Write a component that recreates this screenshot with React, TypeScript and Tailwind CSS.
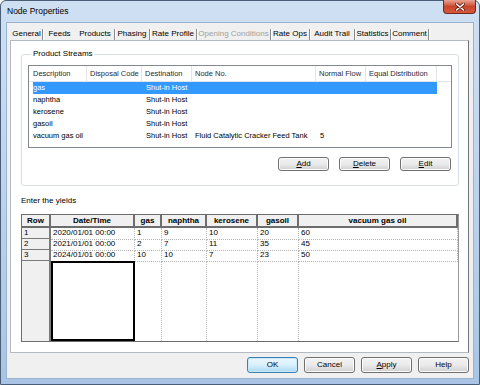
import React from 'react';

const tabs: { label: string; w: string; sep: boolean; disabled?: boolean }[] = [
  { label: 'General', w: 'w-[31px]', sep: true },
  { label: 'Feeds', w: 'w-[33px]', sep: false },
  { label: 'Products', w: 'w-[38px]', sep: true },
  { label: 'Phasing', w: 'w-[34px]', sep: true },
  { label: 'Rate Profile', w: 'w-[46px]', sep: true },
  { label: 'Opening Conditions', w: 'w-[73px]', sep: true, disabled: true },
  { label: 'Rate Ops', w: 'w-[38px]', sep: true },
  { label: 'Audit Trail', w: 'w-[44px]', sep: true },
  { label: 'Statistics', w: 'w-[35px]', sep: true },
  { label: 'Comment', w: 'w-[37px]', sep: true },
];

const streams = [
  { desc: 'gas', dest: 'Shut-in Host', node: '', flow: '' },
  { desc: 'naphtha', dest: 'Shut-in Host', node: '', flow: '' },
  { desc: 'kerosene', dest: 'Shut-in Host', node: '', flow: '' },
  { desc: 'gasoil', dest: 'Shut-in Host', node: '', flow: '' },
  { desc: 'vacuum gas oil', dest: 'Shut-in Host', node: 'Fluid Catalytic Cracker Feed Tank', flow: '5' },
];

const listCols = 'grid grid-cols-[58px_55px_50px_124px_50px_71px_1fr]';

const yields = [
  ['1', '2020/01/01 00:00', '1', '9', '10', '20', '60'],
  ['2', '2021/01/01 00:00', '2', '7', '11', '35', '45'],
  ['3', '2024/01/01 00:00', '10', '10', '7', '23', '50'],
];

const gridCols = 'grid grid-cols-[29px_84px_27px_45px_51px_41px_1fr]';

const WinButton = ({ children, primary }: { children: React.ReactNode; primary?: boolean }) => (
  <button
    className={
      'flex h-full w-[51px] items-center justify-center rounded-[3px] border text-[8px] text-black ' +
      (primary
        ? 'border-[#3c7fb1] bg-gradient-to-b from-[#eaf6fd] via-[#d9f0fc] to-[#a7d9f5] shadow-[inset_0_0_0_1px_#cbe8f8]'
        : 'border-[#707070] bg-gradient-to-b from-[#f2f2f2] via-[#ebebeb] to-[#cfcfcf] shadow-[inset_0_0_0_1px_#fcfcfc]')
    }
  >
    {children}
  </button>
);

export default function App() {
  return (
    <div className="flex h-[385px] w-[480px] flex-col rounded-t-[6px] border border-[#4a5e78] bg-gradient-to-b from-[#cfe0f3] via-[#bcd3ec] to-[#a9c4e4] px-[5px] pb-[5px] font-['Liberation_Sans',Arial,sans-serif]">
      {/* title bar */}
      <div className="relative flex h-[21px] shrink-0 items-center pl-[1px]">
        <span className="text-[8.5px] text-black">Node Properties</span>
        <div className="absolute right-[-2px] top-[-1px] flex h-[14px] w-[33px] items-center justify-center rounded-b-[4px] border border-t-0 border-[#6b2b22] bg-gradient-to-b from-[#e8a493] via-[#c9462c] to-[#d8583c]">
          <svg width="10" height="8" viewBox="0 0 10 8">
            <path d="M1.5 1 L8.5 7 M8.5 1 L1.5 7" stroke="#5a1b12" strokeWidth="3" strokeLinecap="round" />
            <path d="M1.5 1 L8.5 7 M8.5 1 L1.5 7" stroke="#ffffff" strokeWidth="1.6" strokeLinecap="round" />
          </svg>
        </div>
      </div>

      {/* client area */}
      <div className="flex h-[357px] w-[468px] flex-col border border-[#9bb4d2] bg-[#f0f0f0]">
        {/* tab strip */}
        <div className="flex h-[17px] shrink-0 items-center pl-[4px] pt-[5px] text-[8px]">
          {tabs.map((t) => (
            <React.Fragment key={t.label}>
              <span
                className={
                  'flex justify-center whitespace-nowrap ' +
                  t.w +
                  (t.disabled ? ' text-[#a0a0a0]' : ' text-black')
                }
              >
                {t.label}
              </span>
              {t.sep && <span className="h-[11px] w-[1px] bg-[#8a8a8a] shadow-[1px_0_0_#ffffff]" />}
            </React.Fragment>
          ))}
        </div>

        {/* tab page */}
        <div className="ml-[3px] flex h-[313px] w-[459px] flex-col border border-[#b5b9c1] border-r-[#6f737a] bg-white px-[10px]">
          <fieldset className="mt-[7px] h-[138px] w-[438px] shrink-0 rounded-[3px] border border-[#d5dfe5] px-[6px]">
            <legend className="ml-[3px] px-[2px] text-[8px] text-black">Product Streams</legend>
            <div className="mt-[5px] h-[83px] w-[424px] border border-[#828790] bg-white text-[7.5px] text-black">
              <div className={listCols + ' h-[16px] border-b border-[#e0e3e8] text-[#1e2a3a]'}>
                {['Description', 'Disposal Code', 'Destination', 'Node No.', 'Normal Flow', 'Equal Distribution'].map(
                  (h, i) => (
                    <div key={h} className={'flex items-center border-r border-[#e5e5e5] ' + (i === 0 ? 'pl-[4px]' : 'pl-[3px]')}>
                      {h}
                    </div>
                  )
                )}
                <div />
              </div>
              {streams.map((s, i) => (
                <div key={s.desc} className={listCols + ' h-[12px] leading-[12px]'}>
                  <div className={'ml-[4px] ' + (i === 0 ? 'bg-[#3399ff] text-white' : '')}>{s.desc}</div>
                  <div className={i === 0 ? 'bg-[#3399ff]' : ''} />
                  <div className={'whitespace-nowrap pl-[4px] ' + (i === 0 ? 'bg-[#3399ff] text-white' : '')}>{s.dest}</div>
                  <div className={'whitespace-nowrap pl-[3px] ' + (i === 0 ? 'bg-[#3399ff]' : '')}>{s.node}</div>
                  <div className={'pl-[4px] ' + (i === 0 ? 'bg-[#3399ff]' : '')}>{s.flow}</div>
                  <div className={i === 0 ? 'bg-[#3399ff]' : ''} />
                  <div />
                </div>
              ))}
            </div>
            <div className="mt-[9px] flex h-[14px] justify-end gap-[10px] pr-[1px]">
              <WinButton>
                <span className="underline">A</span>dd
              </WinButton>
              <WinButton>
                <span className="underline">D</span>elete
              </WinButton>
              <WinButton>
                <span className="underline">E</span>dit
              </WinButton>
            </div>
          </fieldset>

          <div className="mt-[10px] h-[10px] shrink-0 text-[8px] leading-[10px] text-black">Enter the yields</div>

          {/* yields grid */}
          <div className="mt-[8px] flex h-[128px] w-[438px] shrink-0 flex-col border border-[#6d6d6d] border-r-[#9a9a9a] bg-white text-[8px] text-black">
            <div className={gridCols + ' h-[13px] shrink-0'}>
              {['Row', 'Date/Time', 'gas', 'naphtha', 'kerosene', 'gasoil', 'vacuum gas oil'].map((h) => (
                <div
                  key={h}
                  className="flex items-center justify-center border-b-2 border-r-2 border-b-[#6d6d6d] border-r-[#6d6d6d] bg-[#f0f0f0] font-bold leading-none"
                >
                  {h}
                </div>
              ))}
            </div>
            {yields.map((r) => (
              <div key={r[0]} className={gridCols + ' h-[11px] shrink-0 leading-[10px]'}>
                {r.map((c, j) => (
                  <div
                    key={j}
                    className={
                      j === 0
                        ? 'border-b-2 border-r-2 border-b-[#7a7a7a] border-r-[#7a7a7a] bg-[#f0f0f0] pl-[2px]'
                        : 'border-b border-r border-dotted border-[#b4b4b4] pl-[2px]'
                    }
                  >
                    {c}
                  </div>
                ))}
              </div>
            ))}
            <div className={gridCols + ' flex-1'}>
              <div className="border-r-2 border-r-[#7a7a7a] bg-[#f0f0f0]" />
              <div className="border-2 border-black" />
              <div className="border-r border-dotted border-[#b4b4b4]" />
              <div className="border-r border-dotted border-[#b4b4b4]" />
              <div className="border-r border-dotted border-[#b4b4b4]" />
              <div className="border-r border-dotted border-[#b4b4b4]" />
              <div />
            </div>
          </div>
        </div>

        {/* dialog buttons */}
        <div className="mt-[4px] flex h-[16px] justify-end gap-[6px] pr-[4px]">
          <WinButton primary>OK</WinButton>
          <WinButton>Cancel</WinButton>
          <WinButton>
            <span className="underline">A</span>pply
          </WinButton>
          <WinButton>Help</WinButton>
        </div>
      </div>
    </div>
  );
}
